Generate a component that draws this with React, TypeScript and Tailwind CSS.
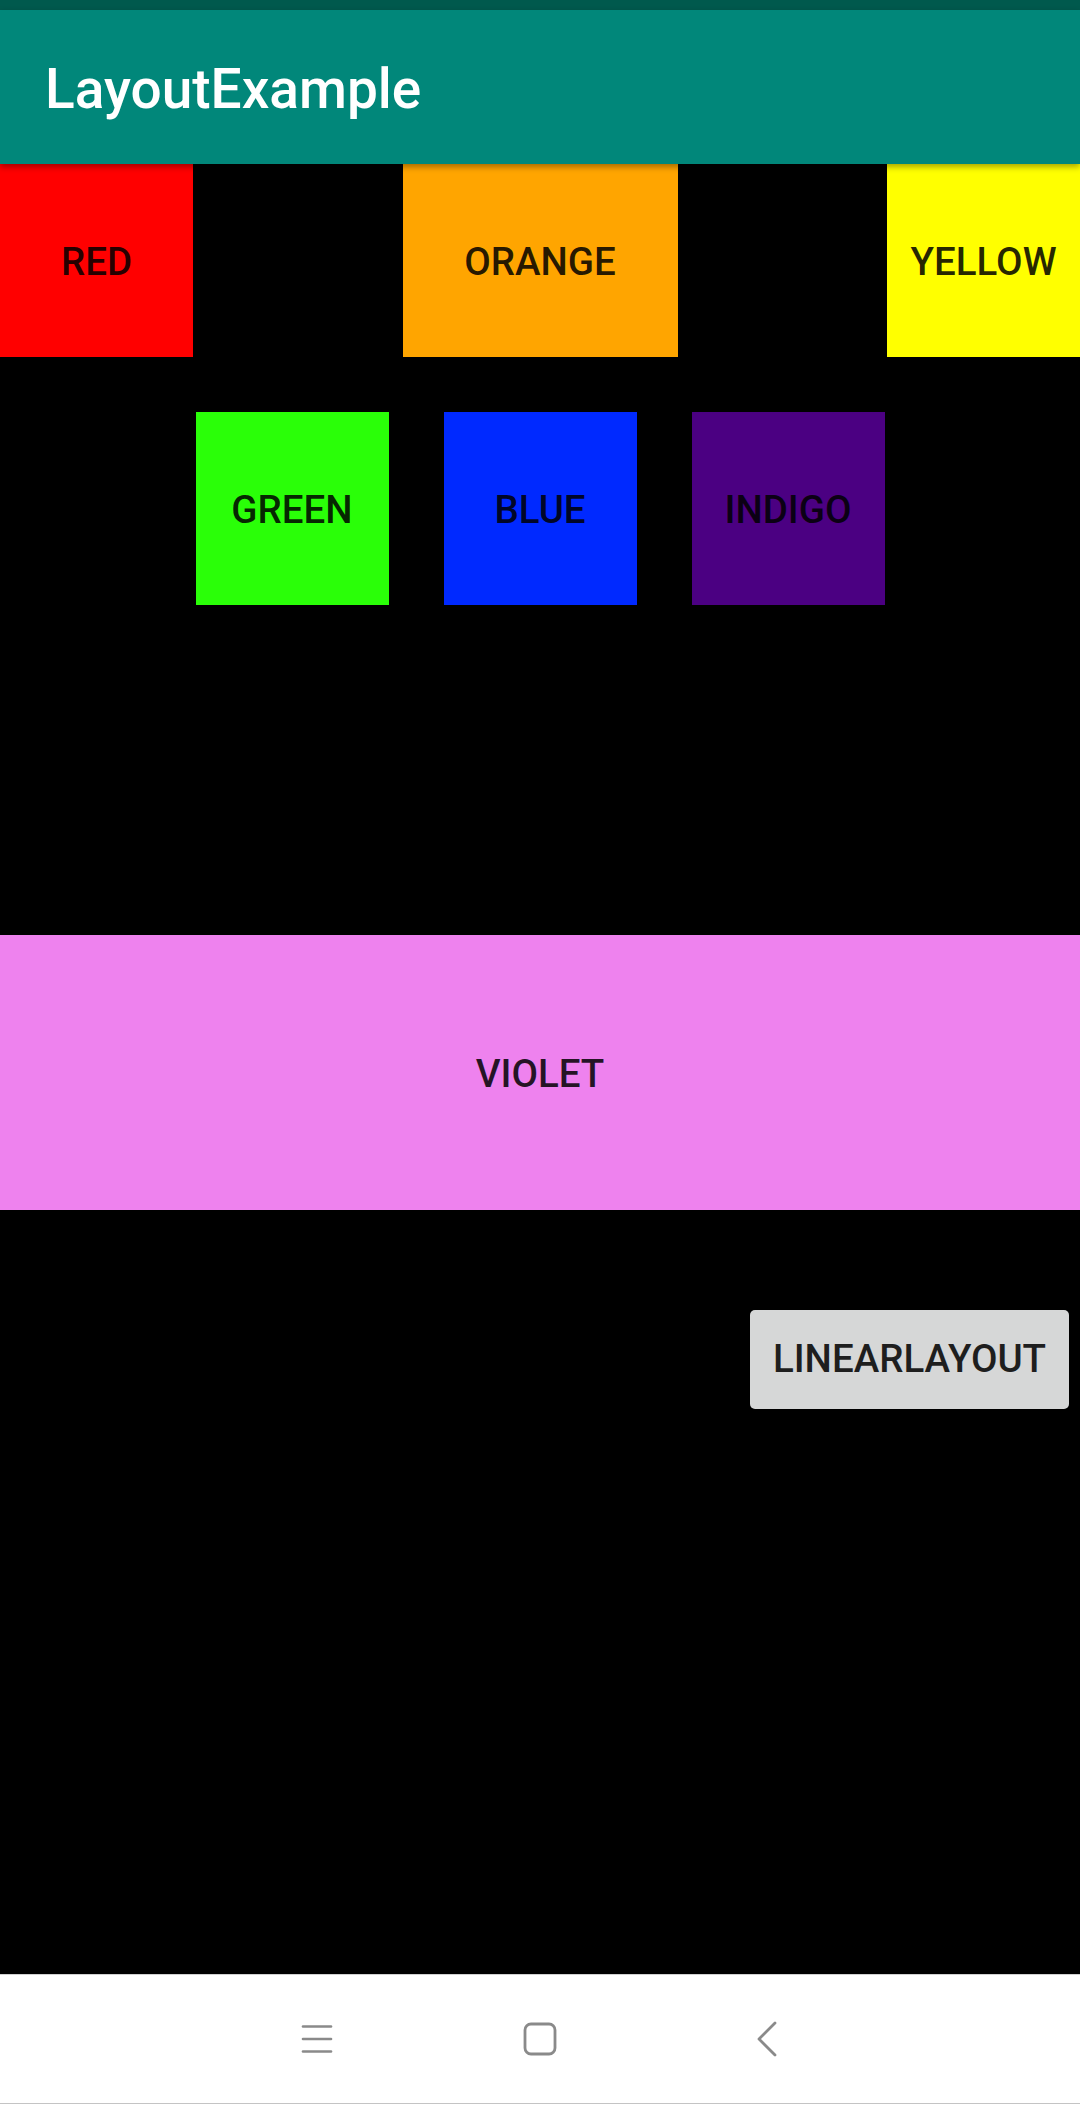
import React from "react";

const font = { fontFamily: "Roboto, 'Noto Sans', Arial, sans-serif" };

function Box({ className, label }: { className: string; label: string }) {
  return (
    <div className={`flex items-center justify-center pt-[4px] ${className}`}>
      <span className="text-[38.5px] font-medium leading-none text-black/85">{label}</span>
    </div>
  );
}

export default function App() {
  return (
    <div className="w-[1080px] h-[2104px] bg-black flex flex-col overflow-hidden" style={font}>
      <div className="h-[10px] bg-[#00594d] shrink-0" />
      <div className="relative z-10 h-[154px] shrink-0 bg-[#01877a] pl-[45px] pt-[52px] shadow-[0_3px_6px_rgba(0,0,0,0.35)]">
        <span className="block text-[55px] leading-[55px] font-medium text-white">LayoutExample</span>
      </div>

      <div className="flex justify-between h-[193px] shrink-0">
        <Box className="w-[193px] bg-[#ff0000]" label="RED" />
        <Box className="w-[275px] bg-[#ffa500]" label="ORANGE" />
        <Box className="w-[193px] bg-[#ffff00]" label="YELLOW" />
      </div>

      <div className="mt-[55px] flex justify-center gap-[55px] h-[193px] shrink-0">
        <Box className="w-[193px] bg-[#2aff08]" label="GREEN" />
        <Box className="w-[193px] bg-[#0029ff]" label="BLUE" />
        <Box className="w-[193px] bg-[#4b0082]" label="INDIGO" />
      </div>

      <Box className="mt-[330px] h-[275px] w-full shrink-0 bg-[#ee82ee]" label="VIOLET" />

      <div className="mt-[100px] flex justify-end pr-[11px] shrink-0">
        <div className="w-[319px] h-[99px] rounded-[5px] bg-[#d6d7d7] flex items-center justify-center shadow-[0_1px_2px_rgba(0,0,0,0.3)]">
          <span className="text-[38.5px] font-medium leading-none text-[#1e1e1e]">LINEARLAYOUT</span>
        </div>
      </div>

      <div className="flex-1" />

      <div className="h-[130px] shrink-0 bg-white border-t border-[#d0d0d0] border-b border-b-[#c4c4c4] flex items-center pl-[287px] gap-[163px]">
        <div className="w-[60px] flex justify-center">
          <svg width="32" height="30" viewBox="0 0 32 30" fill="none" stroke="#8a8a8a" strokeWidth="2.6" strokeLinecap="round">
            <line x1="2" y1="2.5" x2="30" y2="2.5" />
            <line x1="2" y1="15" x2="30" y2="15" />
            <line x1="2" y1="27.5" x2="30" y2="27.5" />
          </svg>
        </div>
        <div className="w-[60px] flex justify-center">
          <svg width="34" height="34" viewBox="0 0 34 34" fill="none" stroke="#8a8a8a" strokeWidth="2.8">
            <rect x="2" y="2" width="30" height="30" rx="6" />
          </svg>
        </div>
        <div className="w-[60px] flex justify-center ml-[4px]">
          <svg width="22" height="36" viewBox="0 0 22 36" fill="none" stroke="#8a8a8a" strokeWidth="2.8" strokeLinecap="round" strokeLinejoin="round">
            <polyline points="19,2 3,18 19,34" />
          </svg>
        </div>
      </div>
    </div>
  );
}
